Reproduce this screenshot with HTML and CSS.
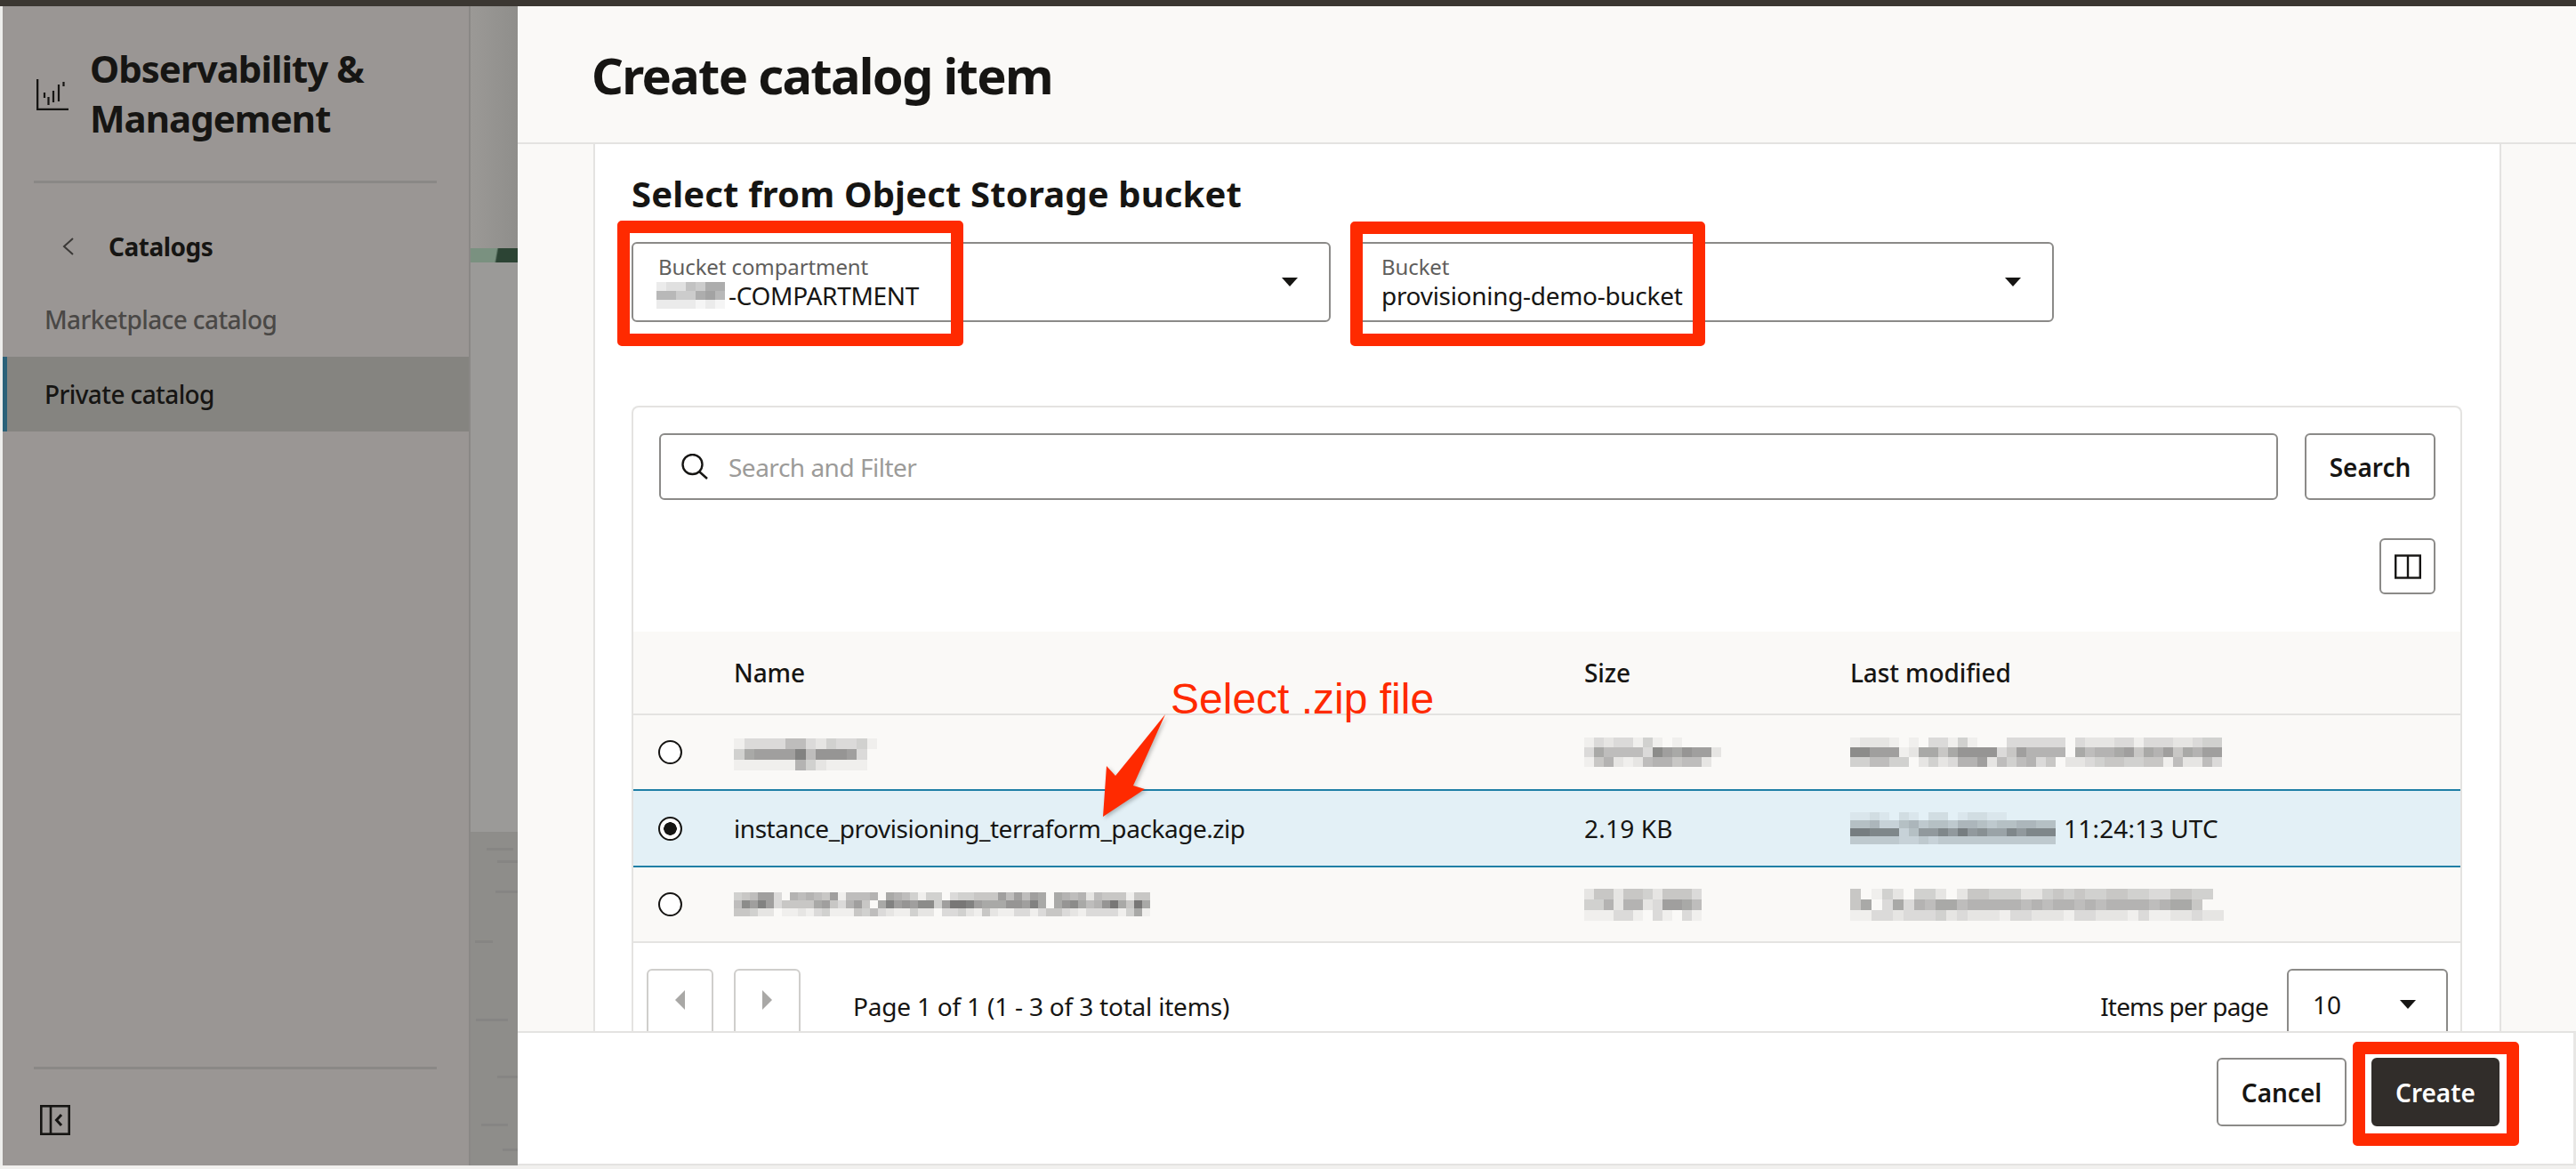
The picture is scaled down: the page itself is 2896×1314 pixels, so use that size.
FILE: index.html
```html
<!DOCTYPE html>
<html lang="en">

<head>
    <meta charset="UTF-8">
    <meta name="viewport" content="width=device-width, initial-scale=1.0">
    <title>Create catalog item</title>
    <link rel="stylesheet" href="styles.css">
</head>

<body>
    <div class="topbar"></div>

    <div class="shell">
        <aside class="sidebar">
            <div class="brand">
                <svg class="brand-icon" viewBox="0 0 36 35" fill="none" stroke="#161513" stroke-width="2.200">
                    <path d="M1 0V34H36" stroke-width="2.600" />
                    <path d="M9 15V21M13.500 20V29M19 13V26M25 6V25M30.500 3V8" />
                </svg>
                <div class="brand-name">Observability &amp;<br>Management</div>
            </div>
            <div class="side-rule"></div>
            <div class="back-row">
                <svg class="back-icon" viewBox="0 0 13 20" fill="none" stroke="#3a3836" stroke-width="2">
                    <path d="M12 1L2 10L12 19" />
                </svg>
                <span>Catalogs</span>
            </div>
            <div class="nav-item">Marketplace catalog</div>
            <div class="nav-item active">Private catalog</div>
            <div class="side-bottom">
                <div class="side-rule bottom-rule"></div>
                <svg class="collapse-icon" viewBox="0 0 34 34" fill="none" stroke="#161513" stroke-width="2.600">
                    <rect x="1.300" y="1.300" width="31.400" height="31.400" />
                    <path d="M12 1V33" />
                    <path d="M24 11L18.500 17L24 23" stroke-width="3" />
                </svg>
            </div>
        </aside>

        <div class="backdrop">
            <div class="backdrop-top"></div>
            <div class="backdrop-band"></div>
            <div class="backdrop-mid"></div>
            <div class="backdrop-low"></div>
        </div>

        <main class="modal">
            <header class="modal-head">
                <h1>Create catalog item</h1>
            </header>

            <div class="modal-body">
                <div class="gutter"></div>
                <div class="content">
                    <h2>Select from Object Storage bucket</h2>

                    <div class="select-row">
                        <div class="select">
                            <div>
                                <div class="select-label">Bucket compartment</div>
                                <div class="select-value"><span class="mosaic cells-comp" data-cells="2336588,7755897,2222121"></span>-COMPARTMENT</div>
                            </div>
                            <span class="caret"></span>
                        </div>
                        <div class="select">
                            <div>
                                <div class="select-label">Bucket</div>
                                <div class="select-value">provisioning-demo-bucket</div>
                            </div>
                            <span class="caret"></span>
                        </div>
                    </div>

                    <section class="card">
                        <div class="tools">
                            <div class="search-row">
                                <div class="search-input">
                                    <svg class="search-icon" viewBox="0 0 30 30" fill="none" stroke="#161513" stroke-width="2.400">
                                        <circle cx="12.500" cy="12" r="11" />
                                        <path d="M20 20L29 28" />
                                    </svg>
                                    <span>Search and Filter</span>
                                </div>
                                <button class="btn search-btn">Search</button>
                            </div>
                            <div class="columns-row">
                                <button class="btn columns-btn">
                                    <svg viewBox="0 0 30 28" fill="none" stroke="#161513" stroke-width="2.400">
                                        <rect x="1.200" y="1.500" width="27.600" height="25" />
                                        <path d="M15 1V27" />
                                    </svg>
                                </button>
                            </div>
                        </div>

                        <div class="tbl-row tbl-head">
                            <div></div>
                            <div>Name</div>
                            <div>Size</div>
                            <div>Last modified</div>
                        </div>
                        <div class="tbl-row">
                            <div><span class="radio"></span></div>
                            <div><span class="mosaic cells-a" data-cells="13333663243341,48999 9c6aaa930,11111174211110"></span></div>
                            <div><span class="mosaic cells-c" data-cells="1323314101000,3866663b98a992,1572126775662"></span></div>
                            <div><span class="mosaic cells-d" data-cells="12221010331410003333330322233133322344,bb99912885 8aaaa35977770867789587958799,44664402423779264673502234554455162263"></span></div>
                        </div>
                        <div class="tbl-row selected">
                            <div><span class="radio on"></span></div>
                            <div>instance_provisioning_terraform_package.zip</div>
                            <div class="size-cell">2.19 KB</div>
                            <div class="date-cell"><span class="mosaic cells-e" data-cells="112102102201221100000,556335645546654556655,ccbbb3599b9c9a88b9bbb,444443343444444444444"></span>11:24:13 UTC</div>
                        </div>
                        <div class="tbl-row">
                            <div><span class="radio"></span></div>
                            <div><span class="mosaic cells-b" data-cells="4569930767659166670876414403445559696980876726555155,6b9c93555589537950 8c9a9bb49ddc9888aa9c808ab867ad85d8,5542201121341115463211422033421521133135532133331481"></span></div>
                            <div><span class="mosaic cells-f" data-cells="255255425553,447277239986,111331031031"></span></div>
                            <div><span class="mosaic cells-g" data-cells="5014204420255444224545445544335544,58038376886777776767767677776788 5,1133233342322213322213 3222131122322"></span></div>
                        </div>

                        <div class="pager">
                            <button class="btn page-btn"><span class="tri left"></span></button>
                            <button class="btn page-btn"><span class="tri right"></span></button>
                            <span class="page-text">Page 1 of 1 (1 - 3 of 3 total items)</span>
                            <span class="per-page">Items per page</span>
                            <div class="per-select">
                                <span>10</span>
                                <span class="caret"></span>
                            </div>
                        </div>
                    </section>
                </div>
                <div class="gutter right"></div>
            </div>

            <footer class="modal-foot">
                <button class="btn cancel">Cancel</button>
                <button class="btn create">Create</button>
            </footer>
        </main>
    </div>

    <div class="bottombar"></div>

    <!-- red annotations drawn over the screenshot -->
    <div class="callout box-comp"></div>
    <div class="callout box-bucket"></div>
    <div class="callout box-create"></div>
    <div class="note">Select .zip file</div>
    <svg class="note-arrow" viewBox="0 0 80 125">
        <polygon points="70,3 34,83 47,87 0,118 4,61 14,72" fill="#ff2a00" />
    </svg>

    <script src="script.js"></script>
</body>

</html>
```

FILE: styles.css
```css
* {
    box-sizing: border-box;
}

html,
body {
    margin: 0;
    height: 1314px;
    overflow: hidden;
}

body {
    position: relative;
    font-family: "Noto Sans", "Open Sans", Arial, sans-serif;
    color: #161513;
    background-color: #fff;
}

.topbar {
    height: 7px;
    background-color: #3b3732;
}

.shell {
    display: flex;
    height: 1303px;
    padding-left: 3px;
    background-color: #eeeeec;
}

.bottombar {
    height: 4px;
    background-color: #f1f0ee;
}

/* sidebar */
.sidebar {
    display: flex;
    flex-direction: column;
    width: 526px;
    flex: none;
    background-color: #9a9694;
    border-right: 2px solid #8a8886;
}

.brand {
    display: flex;
    align-items: center;
    gap: 24px;
    padding: 38px 0 0 38px;
    height: 158px;
}

.brand-icon {
    width: 36px;
    height: 35px;
    margin-top: 3px;
}

.brand-name {
    font-size: 42px;
    line-height: 56px;
    font-weight: 700;
    letter-spacing: -1px;
}

.side-rule {
    height: 3px;
    margin: 38px 36px 0 35px;
    background-color: #8a8886;
}

.back-row {
    display: flex;
    align-items: center;
    gap: 39px;
    height: 40px;
    margin: 51px 0 20px 67px;
    font-size: 28px;
    font-weight: 700;
    letter-spacing: -0.5px;
}

.back-icon {
    width: 13px;
    height: 20px;
}

.nav-item {
    height: 84px;
    padding-left: 47px;
    line-height: 84px;
    font-size: 28px;
    font-weight: 500;
    letter-spacing: -0.6px;
    color: #4a4846;
}

.nav-item.active {
    padding-left: 42px;
    border-left: 5px solid #2b6178;
    background-color: #858480;
    color: #161513;
}

.side-bottom {
    margin-top: auto;
    height: 111px;
}

.bottom-rule {
    margin-top: 0;
}

.collapse-icon {
    display: block;
    width: 34px;
    height: 34px;
    margin: 40px 0 0 42px;
}

/* dimmed page behind the panel */
.backdrop {
    display: flex;
    flex-direction: column;
    width: 53px;
    flex: none;
}

.backdrop-top {
    height: 272px;
    background: linear-gradient(90deg, #9b9996, #8f8e8b);
}

.backdrop-band {
    height: 16px;
    background: linear-gradient(100deg, #7a9180 53%, #2c4434 57%);
}

.backdrop-mid {
    height: 640px;
    background-color: #9b9a98;
}

.backdrop-low {
    flex: 1;
    background-color: #8e8d8a;
    background-image:
        linear-gradient(#868583, #868583), linear-gradient(#868583, #868583), linear-gradient(#868583, #868583),
        linear-gradient(#868583, #868583), linear-gradient(#868583, #868583), linear-gradient(#868583, #868583),
        linear-gradient(#868583, #868583), linear-gradient(#868583, #868583), linear-gradient(#868583, #868583);
    background-repeat: no-repeat;
    background-size: 30px 3px, 24px 3px, 26px 3px, 20px 3px, 36px 3px, 24px 3px, 30px 3px, 36px 3px, 20px 3px;
    background-position: 18px 18px, 30px 32px, 28px 66px, 5px 122px, 6px 210px, 30px 274px, 12px 328px, 0 378px, 36px 356px;
}

/* panel */
.modal {
    display: flex;
    flex-direction: column;
    flex: 1;
    min-width: 0;
    background-color: #fff;
}

.modal-head {
    display: flex;
    align-items: center;
    height: 155px;
    padding-left: 83px;
    background-color: #faf9f7;
    border-bottom: 2px solid #e4e3e1;
}

h1 {
    margin: 0;
    font-size: 56px;
    font-weight: 700;
    letter-spacing: -1.700px;
}

.modal-body {
    display: flex;
    flex: 1;
    min-height: 0;
}

.gutter {
    width: 87px;
    flex: none;
    background-color: #faf9f7;
    border-right: 2px solid #e4e3e1;
}

.gutter.right {
    width: 86px;
    border-right: none;
    border-left: 2px solid #e4e3e1;
}

.content {
    flex: 1;
    min-width: 0;
    overflow: hidden;
    padding: 36px 0 0 41px;
}

h2 {
    margin: 0;
    font-size: 40px;
    line-height: 40px;
    font-weight: 700;
    letter-spacing: 0.150px;
}

.select-row {
    display: flex;
    gap: 27px;
    margin-top: 34px;
}

.select {
    display: flex;
    align-items: center;
    justify-content: space-between;
    width: 786px;
    height: 90px;
    padding: 0 35px 0 28px;
    border: 2px solid #8b8a88;
    border-radius: 6px;
}

.select > div {
    margin-top: -3px;
}

.select-label {
    font-size: 24px;
    line-height: 32px;
    color: #5f5e5c;
    letter-spacing: -0.1px;
}

.select-value {
    display: flex;
    align-items: center;
    height: 32px;
    font-size: 28px;
    line-height: 32px;
    letter-spacing: -0.3px;
}

.caret {
    width: 0;
    height: 0;
    border-left: 9px solid transparent;
    border-right: 9px solid transparent;
    border-top: 10px solid #161513;
}

/* pixelated redactions */
.mosaic {
    display: inline-grid;
    vertical-align: middle;
}

.cells-comp {
    grid-auto-columns: 11px;
    grid-auto-rows: 10px;
    margin: 0 4px 0 -2px;
}

.cells-a {
    grid-auto-columns: 11.500px;
    grid-auto-rows: 12px;
    margin-top: 5px;
}

.cells-b {
    grid-auto-columns: 9px;
    grid-auto-rows: 9px;
}

.cells-c {
    grid-auto-columns: 11px;
    grid-auto-rows: 11px;
}

.cells-d {
    grid-auto-columns: 11px;
    grid-auto-rows: 11px;
}

.cells-e {
    grid-auto-columns: 11px;
    grid-auto-rows: 9px;
    margin-right: 9px;
}

.cells-f {
    grid-auto-columns: 11px;
    grid-auto-rows: 12px;
}

.cells-g {
    grid-auto-columns: 12px;
    grid-auto-rows: 12px;
}

/* table card */
.card {
    width: 2058px;
    margin-top: 94px;
    border: 2px solid #e4e3e1;
    border-bottom: none;
    border-radius: 8px 8px 0 0;
}

.tools {
    padding: 29px 28px 42px 29px;
}

.search-row {
    display: flex;
    gap: 30px;
}

.search-input {
    display: flex;
    align-items: center;
    gap: 23px;
    flex: 1;
    height: 75px;
    padding-left: 23px;
    border: 2px solid #8b8a88;
    border-radius: 6px;
    font-size: 28px;
    letter-spacing: -0.5px;
    color: #9c9b99;
}

.search-icon {
    width: 30px;
    height: 30px;
}

.btn {
    font-family: inherit;
    color: #161513;
    background-color: #fff;
    border: 2px solid #8b8a88;
    border-radius: 6px;
    padding: 0;
    cursor: pointer;
}

.search-btn {
    width: 147px;
    height: 75px;
    font-size: 28px;
    font-weight: 600;
}

.columns-row {
    display: flex;
    justify-content: flex-end;
    margin-top: 43px;
}

.columns-btn {
    display: flex;
    align-items: center;
    justify-content: center;
    width: 63px;
    height: 63px;
}

.columns-btn svg {
    width: 30px;
    height: 28px;
}

.tbl-row {
    display: grid;
    grid-template-columns: 113px 956px 299px 1fr;
    align-items: center;
    height: 85px;
    font-size: 28px;
    background-color: #faf9f7;
    border-bottom: 2px solid #e4e3e1;
}

.tbl-row > div {
    display: flex;
    align-items: center;
}

.tbl-head {
    height: 94px;
    font-weight: 500;
    letter-spacing: -0.1px;
}

.tbl-row.selected {
    height: 88px;
    margin-top: -2px;
    background-color: #e3f0f6;
    border-top: 2px solid #1f7fa6;
    border-bottom: 2px solid #1f7fa6;
    letter-spacing: -0.45px;
}

.tbl-row.selected .date-cell,
.tbl-row.selected .size-cell {
    letter-spacing: 0.2px;
}

.radio {
    display: block;
    width: 27px;
    height: 27px;
    margin-left: 28px;
    border: 2px solid #161513;
    border-radius: 50%;
    background-color: #fff;
}

.radio.on {
    background: radial-gradient(circle, #161513 7px, #fff 7.500px);
}

.pager {
    display: flex;
    align-items: flex-start;
    height: 110px;
    padding: 29px 14px 0 15px;
}

.page-btn {
    display: flex;
    align-items: center;
    justify-content: center;
    width: 75px;
    height: 75px;
    margin-right: 23px;
    border-color: #cfcecc;
}

.tri {
    width: 0;
    height: 0;
    margin-top: -6px;
    border-top: 11px solid transparent;
    border-bottom: 11px solid transparent;
}

.tri.left {
    border-right: 11px solid #a9a8a6;
}

.tri.right {
    border-left: 11px solid #a9a8a6;
}

.page-text {
    margin: 23px 0 0 36px;
    font-size: 28px;
    line-height: 38px;
    letter-spacing: -0.2px;
}

.per-page {
    margin: 23px 21px 0 auto;
    font-size: 28px;
    line-height: 38px;
    letter-spacing: -0.8px;
}

.per-select {
    display: flex;
    align-items: center;
    justify-content: space-between;
    width: 181px;
    height: 75px;
    padding: 5px 34px 0 27px;
    border: 2px solid #8b8a88;
    border-radius: 6px;
    font-size: 28px;
}

.modal-foot {
    display: flex;
    justify-content: flex-end;
    gap: 28px;
    height: 151px;
    padding: 28px 83px 0 0;
    background-color: #fff;
    border-top: 2px solid #e4e3e1;
    border-bottom: 2px solid #e4e3e1;
    border-right: 3px solid #e8e7e5;
}

.cancel,
.create {
    height: 77px;
    font-size: 28px;
    font-weight: 600;
}

.cancel {
    width: 146px;
}

.create {
    width: 144px;
    color: #fff;
    background-color: #312d2a;
    border-color: #312d2a;
}

/* annotations */
.callout {
    position: absolute;
    border: 14px solid #ff2a00;
    border-radius: 5px;
}

.box-comp {
    left: 694px;
    top: 248px;
    width: 389px;
    height: 141px;
}

.box-bucket {
    left: 1518px;
    top: 249px;
    width: 399px;
    height: 140px;
}

.box-create {
    left: 2645px;
    top: 1171px;
    width: 187px;
    height: 117px;
}

.note {
    position: absolute;
    left: 1316px;
    top: 758px;
    font-family: "Liberation Sans", Arial, sans-serif;
    font-size: 48px;
    color: #ff2a00;
}

.note-arrow {
    position: absolute;
    left: 1240px;
    top: 800px;
    width: 80px;
    height: 125px;
    filter: drop-shadow(2px 2px 2px rgba(0, 0, 0, 0.25));
}
```

FILE: script.js
```js
// Builds the pixelated blocks that hide private values.
// Each comma separated part of data-cells is a row, each digit a darkness level.
document.querySelectorAll('.mosaic').forEach(block => {
    const rows = block.dataset.cells.split(',');
    rows.forEach((row, y) => {
        [...row.replace(/ /g, '')].forEach((ch, x) => {
            const cell = document.createElement('i');
            cell.style.gridArea = `${y + 1} / ${x + 1}`;
            cell.style.background = `rgba(0, 0, 0, ${parseInt(ch, 16) * 0.04})`;
            block.appendChild(cell);
        });
    });
});
```
